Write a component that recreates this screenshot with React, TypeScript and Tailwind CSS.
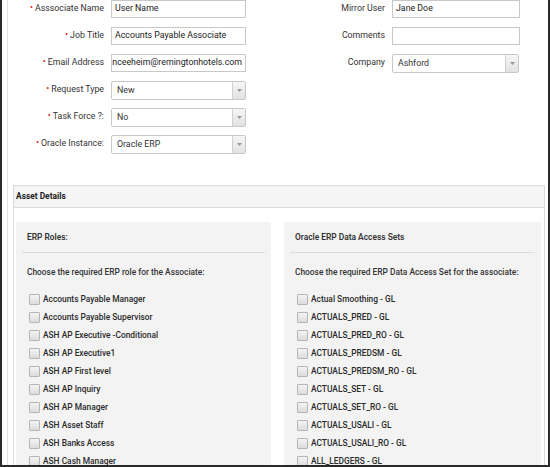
import React from "react";

const roles = [
  "Accounts Payable Manager",
  "Accounts Payable Supervisor",
  "ASH AP Executive -Conditional",
  "ASH AP Executive1",
  "ASH AP First level",
  "ASH AP Inquiry",
  "ASH AP Manager",
  "ASH Asset Staff",
  "ASH Banks Access",
  "ASH Cash Manager",
];

const accessSets = [
  "Actual Smoothing - GL",
  "ACTUALS_PRED - GL",
  "ACTUALS_PRED_RO - GL",
  "ACTUALS_PREDSM - GL",
  "ACTUALS_PREDSM_RO - GL",
  "ACTUALS_SET - GL",
  "ACTUALS_SET_RO - GL",
  "ACTUALS_USALI - GL",
  "ACTUALS_USALI_RO - GL",
  "ALL_LEDGERS - GL",
];

function Req() {
  return <span className="text-[#e02020] text-[9px] mr-[2px] relative -top-[1px]">•</span>;
}

function TextBox({ value, width }: { value: string; width: string }) {
  return (
    <div
      className={`${width} h-[18px] border border-[#c8c8c8] bg-white px-[3px] flex items-center text-[8.8px] text-[#222] overflow-hidden whitespace-nowrap`}
    >
      {value}
    </div>
  );
}

function SelectBox({ value, width }: { value: string; width: string }) {
  return (
    <div className={`${width} h-[19px] border border-[#c8c8c8] bg-white flex items-stretch rounded-[2px]`}>
      <div className="flex-1 flex items-center pl-[5px] text-[8.8px] text-[#333]">{value}</div>
      <div className="w-[13px] border-l border-[#d0d0d0] bg-gradient-to-b from-[#f6f6f6] to-[#e2e2e2] flex items-center justify-center">
        <svg width="5" height="3" viewBox="0 0 5 3">
          <path d="M0 0 L5 0 L2.5 3 Z" fill="#999" />
        </svg>
      </div>
    </div>
  );
}

function Row({
  label,
  required,
  labelWidth,
  children,
}: {
  label: string;
  required?: boolean;
  labelWidth: string;
  children: React.ReactNode;
}) {
  return (
    <div className="h-[27px] flex items-start gap-[7px]">
      <div className={`${labelWidth} h-[18px] flex items-center justify-end text-[8.8px] text-[#333] whitespace-nowrap`}>
        {required && <Req />}
        {label}
      </div>
      {children}
    </div>
  );
}

function CheckItem({ label }: { label: string }) {
  return (
    <div className="h-[18px] flex items-center gap-[3px]">
      <div className="w-[11px] h-[11px] border border-[#b5b5b5] rounded-[1px] bg-gradient-to-b from-[#f4f4f4] to-[#dcdcdc]" />
      <span className="text-[8.4px] font-medium text-[#2a2a2a] whitespace-nowrap">{label}</span>
    </div>
  );
}

function ListPanel({
  title,
  hint,
  items,
  width,
}: {
  title: string;
  hint: string;
  items: string[];
  width: string;
}) {
  return (
    <div className={`${width} bg-[#f3f3f3] pt-[8px] px-[6px]`}>
      <div className="pl-[5px] h-[15px] text-[8.4px] font-semibold text-[#333] flex items-center">{title}</div>
      <div className="mt-[7px] border-t border-[#dcdcdc]" />
      <div className="pl-[5px] mt-[13px] h-[12px] text-[8.4px] font-medium text-[#333] flex items-center whitespace-nowrap">
        {hint}
      </div>
      <div className="pl-[7px] mt-[12px] flex flex-col">
        {items.map((it) => (
          <CheckItem key={it} label={it} />
        ))}
      </div>
    </div>
  );
}

export default function App() {
  return (
    <div
      className="w-[550px] h-[467px] overflow-hidden bg-white border-l-2 border-r-2 border-b-2 border-[#2a2a2a]"
      style={{ fontFamily: "Roboto, 'Open Sans', sans-serif" }}
    >
      <div className="ml-[5px] h-full border-l border-[#e2e2e2]">
        {/* Form */}
        <div className="flex">
          <div className="w-[238px] flex flex-col">
            <Row label="Asssociate Name" required labelWidth="w-[96px]">
              <TextBox value="User Name" width="w-[135px]" />
            </Row>
            <Row label="Job Title" required labelWidth="w-[96px]">
              <TextBox value="Accounts Payable Associate" width="w-[135px]" />
            </Row>
            <Row label="Email Address" required labelWidth="w-[96px]">
              <TextBox value="nanceeheim@remingtonhotels.com" width="w-[135px] justify-end" />
            </Row>
            <Row label="Request Type" required labelWidth="w-[96px]">
              <SelectBox value="New" width="w-[135px]" />
            </Row>
            <Row label="Task Force ?:" required labelWidth="w-[96px]">
              <SelectBox value="No" width="w-[135px]" />
            </Row>
            <Row label="Oracle Instance:" required labelWidth="w-[96px]">
              <SelectBox value="Oracle ERP" width="w-[135px]" />
            </Row>
          </div>
          <div className="flex flex-col">
            <Row label="Mirror User" labelWidth="w-[139px]">
              <TextBox value="Jane Doe" width="w-[128px]" />
            </Row>
            <Row label="Comments" labelWidth="w-[139px]">
              <TextBox value="" width="w-[128px]" />
            </Row>
            <Row label="Company" labelWidth="w-[139px]">
              <SelectBox value="Ashford" width="w-[127px]" />
            </Row>
          </div>
        </div>

        {/* Asset Details */}
        <div className="mt-[23px] ml-[5px] mr-[3px] border border-[#dcdcdc]">
          <div className="h-[22px] bg-[#f5f5f5] border-b border-[#dcdcdc] flex items-center pl-[2px] text-[8.4px] font-bold text-[#222]">
            Asset Details
          </div>
          <div className="pt-[14px] pl-[2px] pr-[2px] flex gap-[13px]">
            <ListPanel
              title="ERP Roles:"
              hint="Choose the required ERP role for the Associate:"
              items={roles}
              width="w-[255px]"
            />
            <ListPanel
              title="Oracle ERP Data Access Sets"
              hint="Choose the required ERP Data Access Set for the associate:"
              items={accessSets}
              width="w-[257px]"
            />
          </div>
        </div>
      </div>
    </div>
  );
}
